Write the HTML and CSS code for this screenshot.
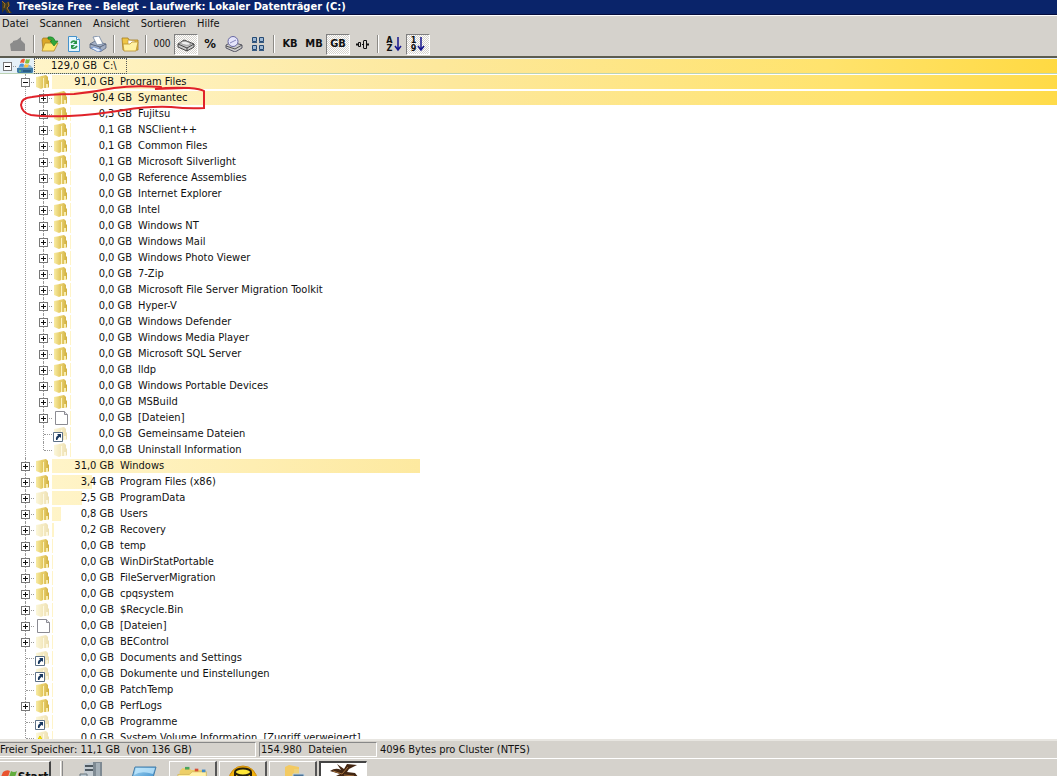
FILE: index.html
```html
<!DOCTYPE html>
<html lang="de">
<head>
<meta charset="utf-8">
<title>TreeSize Free</title>
<link rel="stylesheet" href="styles.css">
</head>
<body>
<svg class="defs" aria-hidden="true">
  <defs>
    <linearGradient id="gold" x1="0" x2="1"><stop offset="0" stop-color="#f8eca6"/><stop offset="1" stop-color="#e2c65a"/></linearGradient>
    <linearGradient id="goldback" x1="0" x2="1"><stop offset="0" stop-color="#f3dd84"/><stop offset="1" stop-color="#cfae3c"/></linearGradient>
    <linearGradient id="sky" x1="0" y1="0" x2="1" y2="1"><stop offset="0" stop-color="#a9dcf6"/><stop offset="1" stop-color="#2a7fc4"/></linearGradient>
    <symbol id="folder" viewBox="0 0 16 16"><path d="M6 2l5-1 2 2v3l1 1v6l-1 1H6z" fill="url(#goldback)"/><path d="M1 3l6-1 1 1v11l-2 1-5-2z" fill="url(#gold)"/><path d="M8.500 4v10" stroke="#fbf2c0"/><path d="M11 10h2v4h-2z" fill="#f8ecae"/></symbol>
    <symbol id="file" viewBox="0 0 16 16"><path d="M2.500 1.500h9l3 3v10h-12z" fill="#fff" stroke="#8b8b92"/><path d="M11.500 1.500v3h3" fill="#e7e7ef" stroke="#8b8b92"/></symbol>
    <symbol id="link" viewBox="0 0 16 16"><use href="#folder" opacity=".4"/><path d="M.500 6.500h9v9h-9z" fill="#fff" stroke="#5d7187"/><path d="M4 8h4v4L6.700 10.700C5 12 4.500 13 4.500 14H3c-.5-2 .5-4 2.300-4.700z" fill="#17375e"/></symbol>
    <symbol id="warn" viewBox="0 0 16 16"><use href="#folder" opacity=".4"/><path d="M5 6l5 9H0z" fill="#ffef00" stroke="#d9c500"/><path d="M4 9h2v4H4z" fill="#222"/></symbol>
    <symbol id="drive" viewBox="0 0 16 16"><path d="M1 10l2-3h10l3 3v4l-1 1H2l-1-1z" fill="#8fb6d2"/><path d="M0 10h16v4l-1 1H1l-1-1z" fill="#3f7ca8"/><path d="M2 13h2" stroke="#7be26b"/><path d="M6 13h8" stroke="#173f61"/><path d="M4 2q2-2 4-1L7 5Q5 4 3 5z" fill="#ed5a35"/><path d="M9 1q2 1 4 0l-1 4q-2 1-4 0z" fill="#83bd43"/><path d="M3 6q2-1 4 0L6 9Q4 8 2 9z" fill="#4a93dc"/><path d="M8 6q2 1 4 0l-1 3q-2 1-4 0z" fill="#fac33a"/></symbol>
    <symbol id="scan" viewBox="0 0 18 16"><path d="M1 4l1-2h5l1 2h5v10H2z" fill="#dba727" stroke="#a1761b" stroke-width=".7"/><path d="M4 7h13l-4 8H1z" fill="#ffe573" stroke="#b28925" stroke-width=".8"/><path d="M7 1q6-1 7 4h3l-4 5-4-5h2Q10 3 7 3z" fill="#32a83a" stroke="#13762a" stroke-width=".6"/></symbol>
  </defs>
</svg>

<header class="titlebar">
  <svg class="app-icon" viewBox="0 0 14 14"><path d="M2 1l4 2 3-2 1 4-2 3 4 5H7L5 9l-3 4V7z" fill="#3d3b22"/><path d="M2 1l3 3-1 4M8 2l1 4-2 2 3 5" fill="none" stroke="#a36d22"/></svg>
  <h1>TreeSize Free - Belegt - Laufwerk: Lokaler Datenträger (C:)</h1>
</header>

<nav class="menu">
  <button>Datei</button><button>Scannen</button><button>Ansicht</button><button>Sortieren</button><button>Hilfe</button>
</nav>

<div class="toolbar" role="toolbar">
  <button aria-label="Übergeordnet"><svg viewBox="0 0 18 16"><path d="M1 8l3-2V5l4-1 4-3v3l4 4v7H2z" fill="#8b8b8b"/></svg></button>
  <i class="sep"></i>
  <button aria-label="Scannen"><svg viewBox="0 0 18 16"><use href="#scan"/></svg></button>
  <button aria-label="Aktualisieren"><svg viewBox="0 0 18 16"><path d="M3.500.5h8l3 3v12h-11z" fill="#e4f6ff" stroke="#4692cb"/><path d="M11.500.5v3h3" fill="#fff" stroke="#4692cb"/><path d="M6 7q2-3 5-1" fill="none" stroke="#279446" stroke-width="1.700"/><path d="M12 4v4H8zM6 13V9h4z" fill="#279446"/><path d="M12 10q-2 3-5 2" fill="none" stroke="#279446" stroke-width="1.700"/></svg></button>
  <button aria-label="Drucken"><svg viewBox="0 0 18 16"><path d="M1 8l5-3 11 3v4l-6 4L1 12z" fill="#a4b0c5" stroke="#58657e" stroke-width=".8"/><path d="M4 1l6-1 4 8-6 1z" fill="#fff" stroke="#6f83a0" stroke-width=".8"/><path d="M1 8l10 3 6-3M11 11v4" fill="none" stroke="#59657c"/><path d="M2 12l3-1 8 3-4 2z" fill="#e4efff" stroke="#527cc4" stroke-width=".6"/></svg></button>
  <i class="sep"></i>
  <button aria-label="Explorer"><svg viewBox="0 0 18 16"><path d="M1 2h6l1 2h9v10H2z" fill="#efc544" stroke="#a47c20" stroke-width=".8"/><path d="M7 4l7 1v6H7z" fill="#fff" stroke="#b29144" stroke-width=".6"/><path d="M2 8h7l2-2h6l-2 9H3z" fill="#fff1a1" stroke="#ba922d" stroke-width=".8"/></svg></button>
  <i class="sep"></i>
  <button class="digits">000</button>
  <button class="on" aria-label="Belegter Speicher"><svg viewBox="0 0 18 16"><path d="M1 8l6-4 10 4v3l-7 4-9-4z" fill="#c8c8c8" stroke="#444"/><path d="M1 8l9 4 7-4M10 12v3" fill="none" stroke="#444"/><path d="M3 7q5-4 11 1-4 3-11-1" fill="#eee" stroke="#777" stroke-width=".6"/></svg></button>
  <button class="percent">%</button>
  <button aria-label="Dateien"><svg viewBox="0 0 18 16"><path d="M1 9l6-3 10 3v3l-7 4-9-4z" fill="#ccc" stroke="#565664"/><path d="M1 10l9 3 7-4" fill="none" stroke="#555"/><circle cx="8" cy="5.500" r="5" fill="#e5e5fb" stroke="#6767a1"/><path d="M5 7l6-3" stroke="#8585bb"/></svg></button>
  <button aria-label="Kacheln"><svg viewBox="0 0 18 16"><g fill="#9db8d4" stroke="#264a73"><path d="M3.500 1.500h4v4h-4zM10.500 1.500h4v4h-4zM3.500 9.500h4v4h-4zM10.500 9.500h4v4h-4z"/></g><path d="M3 6.500h5M10 6.500h5M3 14.500h5M10 14.500h5" stroke="#365b83"/></svg></button>
  <i class="sep"></i>
  <button>KB</button>
  <button>MB</button>
  <button class="on">GB</button>
  <button aria-label="Automatisch"><svg viewBox="0 0 18 16"><path d="M3 8.500h2M14 8.500h2" stroke="#111" stroke-width="2"/><path d="M5.500 6.500h2v4h-2zM9 8.500h2M10.500 5v7M10.500 4.500h3v8h-3" fill="none" stroke="#111"/></svg></button>
  <i class="sep"></i>
  <button class="sort" aria-label="Nach Name"><span>A<br>Z</span><svg viewBox="0 0 8 16"><path d="M4 1v12M1 10l3 4 3-4" fill="none" stroke="#16168d" stroke-width="1.500"/></svg></button>
  <button class="sort on" aria-label="Nach Größe"><span>1<br>9</span><svg viewBox="0 0 8 16"><path d="M4 1v12M1 10l3 4 3-4" fill="none" stroke="#16168d" stroke-width="1.500"/></svg></button>
</div>

<main class="view">
  <ul class="tree" id="tree"></ul>
  <svg class="mark" viewBox="0 0 190 34" aria-hidden="true"><path d="M165 3L136 4Q152 2 170 3 182 4 185 6V23Q170 24 152 22 130 21 105 25 75 30 50 31 25 32 12 30 3 28 2 20 2 13 13 12 30 9 55 9 75 7 95 3 115 0 142 2" fill="none" stroke="#e0222a" stroke-width="2" stroke-linecap="round"/></svg>
</main>

<footer class="status">
  <span class="cell free">Freier Speicher: 11,1 GB &nbsp;(von 136 GB)</span>
  <span class="cell count">154.980 &nbsp;Dateien</span>
  <span class="cluster">4096 Bytes pro Cluster (NTFS)</span>
</footer>

<div class="taskbar">
  <button class="start"><svg viewBox="0 0 16 16"><path d="M2 3q4-3 7-1L7 8Q4 6 0 8z" fill="#e9532f"/><path d="M10 2q3 2 6 0l-2 6q-3 2-6 0z" fill="#62ad3d"/><path d="M0 9q4-2 7 0l-1 6H0z" fill="#418bd7"/><path d="M8 9q3 2 6 0l-2 6H6z" fill="#f7be2d"/></svg>Start</button>
  <i class="grip"></i>
  <button class="quick" aria-label="Server-Manager"><svg viewBox="0 0 28 28"><path d="M5 3l9-2v25l-9-2z" fill="#c3cbd1"/><path d="M6 5h8M6 9h8" stroke="#4d5860" stroke-width="2"/><path d="M14 1h9v25h-9z" fill="#7e8a93"/><path d="M17 2h4v24h-4z" fill="#a5b0b8"/><path d="M1 13h7v12H1z" fill="#bbc8d1" stroke="#66747d"/></svg></button>
  <button class="quick" aria-label="PowerShell"><svg viewBox="0 0 28 28"><path d="M6 6h21l-5 18H1z" fill="url(#sky)" stroke="#437ca8"/><path d="M7 7h19l-2 6Q12 9 5 14z" fill="#c9edff" opacity=".7"/></svg></button>
  <button class="task" aria-label="Explorer"><svg viewBox="0 0 36 32"><path d="M3 8l3-3h8l2 2h16v23H3z" fill="#edcf68"/><path d="M1 12h13l3-3h16v21H1z" fill="#fff0a8" stroke="#d4b85c"/><path d="M9 5h5" stroke="#49a45b" stroke-width="3"/><path d="M20 7h4" stroke="#d94e32" stroke-width="3"/><path d="M28 8h4" stroke="#438bc9" stroke-width="3"/></svg></button>
  <button class="task" aria-label="Datenbank"><svg viewBox="0 0 32 32"><circle cx="16" cy="18" r="14" fill="#f2b30d" stroke="#cf8a09"/><path d="M8 10v13q8 5 16 0V10" fill="#ffd525" stroke="#27200b" stroke-width="2"/><ellipse cx="16" cy="10" rx="8" ry="3.500" fill="#ffe735" stroke="#27200b" stroke-width="2"/></svg></button>
  <button class="task" aria-label="Dateien"><svg viewBox="0 0 32 32"><path d="M8 5l4-2 10 2v25H8z" fill="#f3ca62"/><path d="M17 7h5v20h-5z" fill="#eed178"/><path d="M16 12h11v12H16z" fill="#4b7397" stroke="#c0d2df"/></svg></button>
  <button class="task active" aria-label="TreeSize"><svg viewBox="0 0 32 32"><path d="M2 8q6-4 11-1L9 1l7 5 3-5 10 1-8 4-2 3 8 1 4 5-9-2-1 16h-8L4 15l8-4z" fill="#432713"/><path d="M5 8l9 3 6-7M16 12l10 1" fill="none" stroke="#a3713e"/></svg></button>
</div>
<script src="tree.js"></script>
</body>
</html>
```
FILE: styles.css
```css
* { box-sizing: border-box; }
body {
  margin: 0;
  height: 100vh;
  display: flex;
  flex-direction: column;
  overflow: hidden;
  background: #d5d2cc;
  color: #111;
  font: 11px/16px "DejaVu Sans Condensed", Tahoma, "DejaVu Sans", sans-serif;
}
button { font: inherit; color: inherit; background: none; border: 0; padding: 0; margin: 0; }
.defs { position: absolute; width: 0; height: 0; }

.titlebar {
  flex: none;
  display: flex;
  align-items: center;
  gap: 3px;
  height: 15px;
  background: #0a246a;
  border-bottom: 1px solid #050c3c;
  color: #fff;
}
.titlebar h1 { margin: 0; font-size: 11px; line-height: 14px; font-weight: bold; white-space: nowrap; }
.app-icon { width: 14px; height: 14px; }

.menu { flex: none; display: flex; gap: 11px; height: 17px; padding-left: 2px; border-top: 1px solid #fff; }

.toolbar {
  flex: none;
  display: flex;
  align-items: center;
  height: 26px;
  padding-left: 6px;
  border-bottom: 2px solid #5c5c50;
  font-weight: bold;
  font-size: 11px;
}
.toolbar button { display: flex; align-items: center; justify-content: center; width: 24px; height: 21px; }
.toolbar svg { width: 18px; height: 16px; }
.toolbar .on {
  border: 1px solid;
  border-color: #808080 #fff #fff #808080;
  background: repeating-conic-gradient(#fff 0 25%, #d5d2cc 0 50%) 0 0 / 2px 2px;
}
.toolbar .digits { font-weight: normal; font-size: 10px; }
.toolbar .percent { font-size: 13px; }
.toolbar .sort { gap: 1px; }
.toolbar .sort span { font-size: 9px; line-height: 8px; }
.toolbar .sort svg { width: 8px; }
.sep { flex: none; width: 2px; height: 18px; margin: 0 3px; border-left: 1px solid #8d8b86; border-right: 1px solid #fff; }

.view { flex: 1; min-height: 0; position: relative; overflow: hidden; background: #fff; }
.tree, .tree ul { list-style: none; margin: 0; padding: 0; }
.tree ul { padding-left: 18px; }
.tree li { position: relative; }
.tree ul > li::before {
  content: "";
  position: absolute;
  left: 7px;
  top: 0;
  bottom: 0;
  border-left: 1px dotted #999;
}
.tree ul ul > li:last-child::before { bottom: 8px; }
.row { display: flex; align-items: center; height: 16px; }
.twig { flex: none; width: 16px; height: 16px; padding: 4px 0 0 3px; position: relative; }
.twig::after { content: ""; position: absolute; left: 8px; right: 0; top: 8px; border-top: 1px dotted #999; }
.toggle {
  display: block;
  position: relative;
  z-index: 1;
  width: 9px;
  height: 9px;
  border: 1px solid #777;
  background:
    linear-gradient(#111, #111) center / 5px 1px no-repeat,
    linear-gradient(#111, #111) center / 1px 5px no-repeat,
    #fff;
}
.toggle[aria-expanded="true"] { background: linear-gradient(#111, #111) center / 5px 1px no-repeat, #fff; }
.icon { flex: none; width: 16px; height: 16px; margin: 0 1px; }
.faded { opacity: .4; }
.label {
  flex: 1;
  display: flex;
  height: 16px;
  position: relative;
  white-space: pre;
}
.bar {
  position: absolute;
  left: 0;
  top: 1px;
  min-width: 1px;
  height: 14px;
  background: linear-gradient(90deg, #fff4c8, #fde89c 38%, #ffe36d 75%, #ffd83c) 0 0 / 100vw 100%;
}
.caption { position: relative; display: flex; gap: 6px; }
.size { width: 62px; text-align: right; }
.root > .row { background: #e6f1f8; border-bottom: 1px solid #bcd3b4; }
.root > .row .caption { padding-right: 9px; border: 1px dotted #555; line-height: 14px; }

.mark { position: absolute; left: 19px; top: 27px; width: 190px; height: 34px; z-index: 2; }

.status {
  flex: none;
  display: flex;
  align-items: center;
  gap: 3px;
  height: 20px;
  border-top: 2px solid #e8e6e1;
  border-bottom: 1px solid #fff;
  white-space: pre;
}
.cell { height: 15px; line-height: 14px; border: 1px solid; border-color: #888 #fff #fff #888; }
.free { width: 256px; border-left: 0; }
.count { width: 118px; padding-left: 1px; }

.taskbar { flex: none; display: flex; align-items: flex-start; gap: 2px; height: 17px; padding-top: 2px; overflow: hidden; }
.taskbar button { flex: none; height: 32px; display: flex; justify-content: center; }
.taskbar svg { width: 32px; height: 32px; }
.taskbar .start {
  width: 51px;
  align-items: center;
  gap: 1px;
  border: 1px solid #fff;
  border-left: 0;
  border-right: 2px solid #444;
  font-size: 12px;
  font-weight: bold;
}
.taskbar .start svg { width: 16px; height: 16px; }
.grip { width: 3px; height: 32px; margin: 0 4px 0 7px; border-left: 1px solid #fff; border-right: 1px solid #888; }
.taskbar .quick { width: 48px; }
.taskbar .quick svg { width: 28px; height: 28px; }
.taskbar .task { width: 48px; border: 1px solid #fff; border-right: 2px solid #555; }
.taskbar .active { background: #fff; border: 2px solid #444; border-right: 1px solid #fff; border-bottom: 0; }
```
FILE: tree.js
```js
// Each entry: size, name, icon, toggle sign, bar width in percent.
const programFiles = [
  ["90,4", "Symantec", "folder", "+", 100],
  ["0,3", "Fujitsu"], ["0,1", "NSClient++"], ["0,1", "Common Files"],
  ["0,1", "Microsoft Silverlight"], ["0,0", "Reference Assemblies"],
  ["0,0", "Internet Explorer"], ["0,0", "Intel"], ["0,0", "Windows NT"],
  ["0,0", "Windows Mail"], ["0,0", "Windows Photo Viewer"], ["0,0", "7-Zip"],
  ["0,0", "Microsoft File Server Migration Toolkit"], ["0,0", "Hyper-V"],
  ["0,0", "Windows Defender"], ["0,0", "Windows Media Player"],
  ["0,0", "Microsoft SQL Server"], ["0,0", "lldp"],
  ["0,0", "Windows Portable Devices"], ["0,0", "MSBuild"],
  ["0,0", "[Dateien]", "file"], ["0,0", "Gemeinsame Dateien", "link", ""],
  ["0,0", "Uninstall Information", "faded", ""]
];
const drive = [
  ["91,0", "Program Files", "folder", "-", 100, programFiles],
  ["31,0", "Windows", "folder", "+", 36.6],
  ["3,4", "Program Files (x86)", "folder", "+", 4],
  ["2,5", "ProgramData", "faded", "+", 3],
  ["0,8", "Users", "folder", "+", 0.9],
  ["0,2", "Recovery", "faded", "+", 0.2],
  ["0,0", "temp"], ["0,0", "WinDirStatPortable"], ["0,0", "FileServerMigration"],
  ["0,0", "cpqsystem"], ["0,0", "$Recycle.Bin", "faded"],
  ["0,0", "[Dateien]", "file"], ["0,0", "BEControl", "faded"],
  ["0,0", "Documents and Settings", "link", ""],
  ["0,0", "Dokumente und Einstellungen", "link", ""],
  ["0,0", "PatchTemp", "folder", ""], ["0,0", "PerfLogs"],
  ["0,0", "Programme", "link", ""],
  ["0,0", "System Volume Information  [Zugriff verweigert]", "warn", ""]
];

function item([size, name, icon = "folder", sign = "+", width = 0, children]) {
  const li = document.createElement("li");
  const faded = icon === "faded";
  const symbol = faded ? "folder" : icon;
  const toggle = sign
    ? `<button class="toggle" aria-expanded="${sign === "-"}" aria-label="${name}"></button>` : "";
  li.innerHTML = `<div class="row"><span class="twig">${toggle}</span>` +
    `<svg class="icon${faded ? " faded" : ""}"><use href="#${symbol}"/></svg>` +
    `<div class="label"><span class="bar" style="width:${width}%"></span>` +
    `<span class="caption"><span class="size">${size} GB</span><span>${name}</span></span></div></div>`;
  if (children) {
    const ul = document.createElement("ul");
    ul.append(...children.map(item));
    li.append(ul);
  }
  return li;
}

const root = item(["129,0", "C:\\", "drive", "-", 100, drive]);
root.className = "root";
document.getElementById("tree").append(root);
```
